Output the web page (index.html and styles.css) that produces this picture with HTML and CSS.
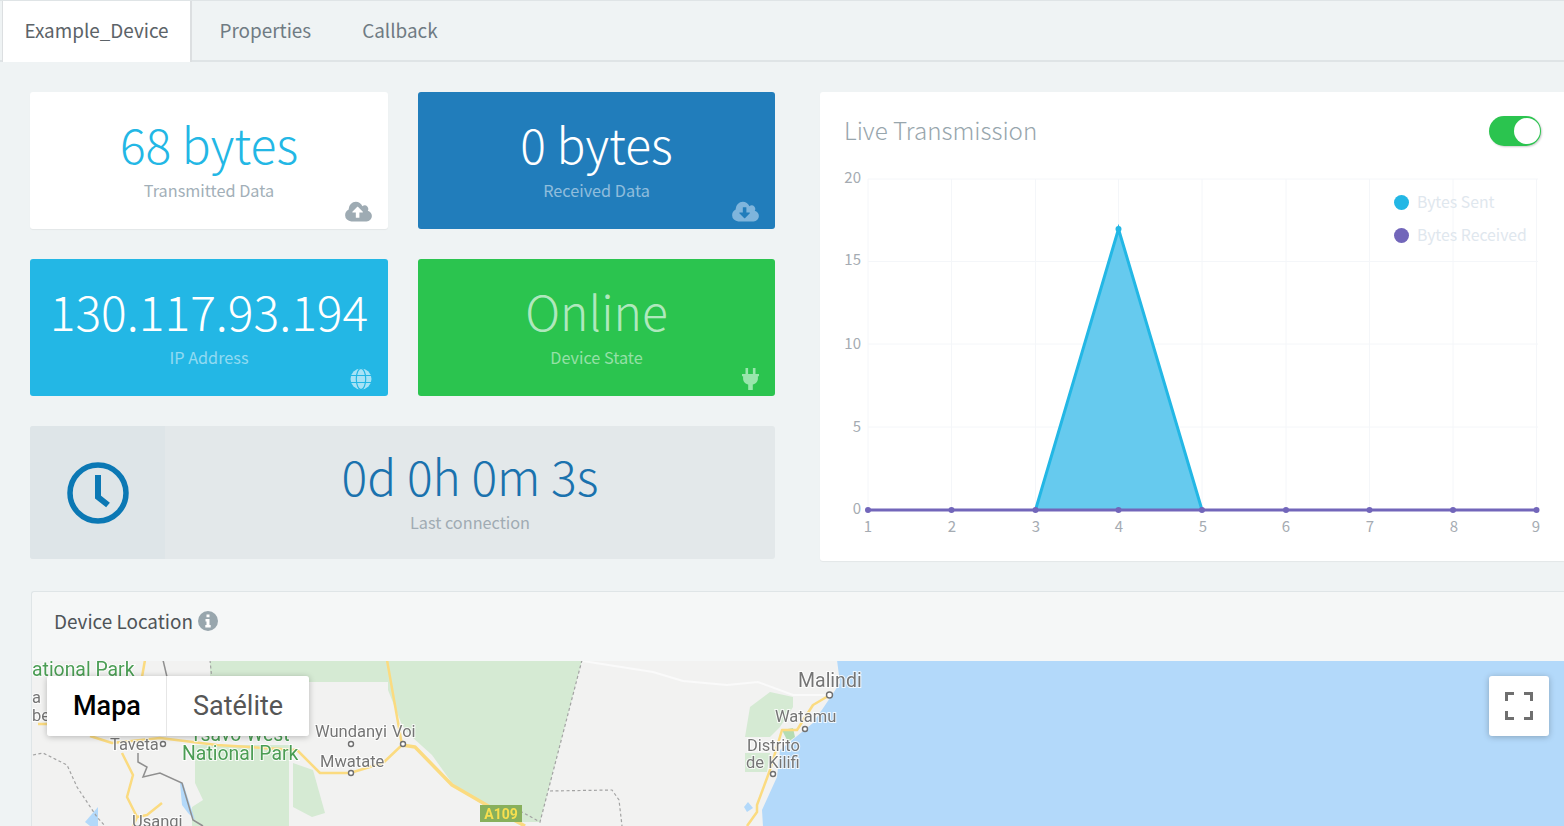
FILE: index.html
```html
<!DOCTYPE html>
<html lang="en">
<head>
<meta charset="utf-8">
<title>Example_Device</title>
<link rel="stylesheet" href="styles.css">
</head>
<body>
<svg class="defs" width="0" height="0" aria-hidden="true">
  <defs>
    <path id="cloud-body" d="M1920 1152q0 159-112.500 271.500t-271.500 112.500h-1088q-185 0-316.500-131.500t-131.500-316.500q0-130 70-240t188-165q-2-30-2-43 0-212 150-362t362-150q156 0 285.500 87t188.500 231q71-62 166-62 106 0 181 75t75 181q0 76-41 138 130 31 213.500 135.500t83.500 238.500z"/>
  </defs>
</svg>
<nav class="tabs">
  <a class="tab tab-active">Example_Device</a>
  <a class="tab">Properties</a>
  <a class="tab">Callback</a>
</nav>
<main class="content">
  <div class="top-grid">
    <section class="stats">
      <div class="stat stat-white">
        <div class="stat-value">68 bytes</div>
        <div class="stat-label">Transmitted Data</div>
        <svg class="stat-icon icon-cloud" viewBox="0 0 1920 1792"><use href="#cloud-body" class="cloud-fill"/><path class="cloud-arrow arrow-white" d="M1280 864q0-14-9-23l-352-352q-9-9-23-9t-23 9l-351 351q-10 12-10 24 0 14 9 23t23 9h224v352q0 13 9.500 22.500t22.500 9.500h192q13 0 22.500-9.500t9.500-22.500v-352h224q13 0 22.500-9.500t9.500-22.500z"/></svg>
      </div>
      <div class="stat stat-blue">
        <div class="stat-value">0 bytes</div>
        <div class="stat-label">Received Data</div>
        <svg class="stat-icon icon-cloud" viewBox="0 0 1920 1792"><use href="#cloud-body" class="cloud-fill"/><path class="cloud-arrow arrow-blue" d="M1280 928q0-14-9-23t-23-9h-224v-352q0-13-9.500-22.500t-22.500-9.500h-192q-13 0-22.500 9.500t-9.500 22.500v352h-224q-13 0-22.500 9.500t-9.500 22.500q0 14 9 23l352 352q9 9 23 9t23-9l351-351q10-12 10-24z"/></svg>
      </div>
      <div class="stat stat-cyan">
        <div class="stat-value">130.117.93.194</div>
        <div class="stat-label">IP Address</div>
        <svg class="stat-icon icon-globe" viewBox="0 0 22 22">
          <circle cx="11" cy="11" r="10.5" class="globe-fill"/>
          <g class="globe-lines">
            <ellipse cx="11" cy="11" rx="4.700" ry="10.500"/>
            <path d="M1 7.500h20M1 14.500h20"/>
          </g>
        </svg>
      </div>
      <div class="stat stat-green">
        <div class="stat-value stat-value-soft">Online</div>
        <div class="stat-label">Device State</div>
        <svg class="stat-icon icon-plug" viewBox="0 0 17 22"><path d="M3.500 0h2.600v6h4.800V0h2.600v6H17v2.200h-1.100v2.600c0 3-2.300 5.300-5.100 5.700V22H6.200v-5.500C3.400 16.100 1.100 13.800 1.100 10.800V8.200H0V6h3.500z"/></svg>
      </div>
      <div class="uptime">
        <div class="uptime-icon">
          <svg class="clock" viewBox="0 0 62 62"><circle cx="31" cy="31" r="28" class="clock-ring"/><path class="clock-hands" d="M31 13v22l10 8"/></svg>
        </div>
        <div class="uptime-body">
          <div class="uptime-value">0d 0h 0m 3s</div>
          <div class="uptime-label">Last connection</div>
        </div>
      </div>
    </section>
    <section class="chart-card">
      <header class="chart-head">
        <h2 class="chart-title">Live Transmission</h2>
        <span class="toggle"><span class="toggle-knob"></span></span>
      </header>
      <svg class="chart" viewBox="820 160 744 400" width="744" height="400">
        <g class="grid">
          <path d="M868 179H1538M868 261.500H1538M868 344H1538M868 427H1538"/>
          <path d="M951.500 179V510M1035.500 179V510M1118.500 179V510M1202 179V510M1286 179V510M1369.500 179V510M1453 179V510M1536.500 179V510M868 179V510"/>
        </g>
        <g class="ticks ticks-y">
          <text x="861" y="183">20</text>
          <text x="861" y="265">15</text>
          <text x="861" y="349">10</text>
          <text x="861" y="432">5</text>
          <text x="861" y="514">0</text>
        </g>
        <g class="ticks ticks-x">
          <text x="868" y="532">1</text>
          <text x="952" y="532">2</text>
          <text x="1036" y="532">3</text>
          <text x="1119" y="532">4</text>
          <text x="1203" y="532">5</text>
          <text x="1286" y="532">6</text>
          <text x="1370" y="532">7</text>
          <text x="1454" y="532">8</text>
          <text x="1536" y="532">9</text>
        </g>
        <polygon class="area" points="1035.500,510 1118.500,229 1202,510"/>
        <polyline class="line-sent" points="1035.500,510 1118.500,229 1202,510"/>
        <circle class="dot-sent" cx="1118.500" cy="229" r="3"/>
        <line class="line-recv" x1="868" y1="510" x2="1536.500" y2="510"/>
        <g class="dot-recv">
          <circle cx="868" cy="510" r="3"/><circle cx="951.500" cy="510" r="3"/><circle cx="1035.500" cy="510" r="3"/><circle cx="1118.500" cy="510" r="3"/><circle cx="1202" cy="510" r="3"/><circle cx="1286" cy="510" r="3"/><circle cx="1369.500" cy="510" r="3"/><circle cx="1453" cy="510" r="3"/><circle cx="1536.500" cy="510" r="3"/>
        </g>
        <circle class="legend-sent" cx="1401.500" cy="202.500" r="7.500"/>
        <text class="legend-text" x="1417" y="208">Bytes Sent</text>
        <circle class="legend-recv" cx="1401.500" cy="235.500" r="7.500"/>
        <text class="legend-text" x="1417" y="241">Bytes Received</text>
      </svg>
    </section>
  </div>
  <section class="location">
    <header class="location-head">
      <span>Device Location</span>
      <svg class="info" viewBox="0 0 20 20"><circle cx="10" cy="10" r="10"/><path class="info-i" d="M8.500 3.500h3v2.800h-3zM7.500 8h4v6h1.200v2.500H7.300V14h1.200v-3.500h-1z"/></svg>
    </header>
    <div class="map">
      <svg class="map-art" viewBox="32 661 1532 166" width="1532" height="166">
        <rect class="land" x="32" y="660" width="1532" height="167"/>
        <g class="park">
          <polygon points="210,660 388,660 388,682 210,682"/>
          <polygon points="388,660 582,660 540,822 522,822 486,807 452,783 432,755 412,737 402,725 388,690"/>
          <polygon points="195,745 289,745 289,826 192,826 192,807 203,800 195,783"/>
          <polygon points="293,763 313,770 325,813 312,817 293,807"/>
          <polygon points="745,737 750,707 770,692 793,697 793,707 780,727 770,737"/>
          <polygon points="745,753 770,753 767,772 745,772"/>
        </g>
        <polygon class="park-deep" points="782,730 793,728 795,737 788,742"/>
        <polyline class="white-road" points="583,661 653,672 683,681 727,685 758,682 793,695 828,695"/>
        <polygon class="sea" points="837,660 840,683 832,695 813,723 780,750 777,777 762,810 763,827 1564,827 1564,660"/>
        <g class="sea">
          <polygon points="180,783 183,783 195,820 188,813 182,805"/>
          <polygon points="98,807 85,822 90,826 98,826"/>
          <polygon points="748,802 753,808 747,812 744,807"/>
        </g>
        <g class="road">
          <polyline points="90,736 112,743 160,738 217,745 297,750 320,773 350,773 383,763 402,745 387,660"/>
          <polyline class="road-wide" points="402,745 415,747 452,785 490,807 525,826"/>
          <polyline points="122,753 133,775 127,797 137,817 133,826"/>
          <polyline points="137,817 147,815 162,803"/>
          <polyline points="145,660 142,677"/>
          <polyline points="38,724 47,724"/>
          <polyline points="830,695 813,705 797,730 782,730 770,770 757,805 757,812 747,826"/>
        </g>
        <g class="border">
          <polyline points="163,660 167,677"/>
          <polyline points="138,753 138,762 147,767 143,777 160,773 182,783 193,820 203,826"/>
        </g>
        <g class="dashed">
          <polyline points="33,755 43,753 67,765 77,787 97,817 105,826"/>
          <polyline points="582,660 540,822 522,812"/>
          <polyline points="550,791 612,790 619,800 622,826"/>
          <polyline points="210,660 212,680"/>
        </g>
        <g class="towns">
          <circle cx="163" cy="744" r="2.500"/><circle cx="351" cy="744" r="2.500"/><circle cx="403" cy="744" r="2.500"/><circle cx="351" cy="773" r="2.500"/><circle cx="829.500" cy="695" r="3"/><circle cx="805" cy="729" r="2.500"/><circle cx="773" cy="774" r="2.500"/>
        </g>
        <g class="label-green">
          <text x="32" y="676">ational Park</text>
          <text x="190" y="741">Tsavo West</text>
          <text x="182" y="760">National Park</text>
        </g>
        <g class="label-grey">
          <text x="32" y="703">a</text>
          <text x="32" y="721">be</text>
          <text x="110" y="750">Taveta</text>
          <text x="315" y="737">Wundanyi</text>
          <text x="392" y="737">Voi</text>
          <text x="320" y="767">Mwatate</text>
          <text x="132" y="827">Usangi</text>
          <text class="label-large" x="798" y="687">Malindi</text>
          <text x="775" y="722">Watamu</text>
          <text x="747" y="751">Distrito</text>
          <text x="746" y="768">de Kilifi</text>
        </g>
        <rect class="shield" x="480" y="805" width="42" height="17"/>
        <text class="shield-text" x="501" y="819">A109</text>
      </svg>
      <div class="map-type">
        <button class="map-btn map-btn-active">Mapa</button>
        <button class="map-btn">Satélite</button>
      </div>
      <button class="map-full" aria-label="Fullscreen">
        <svg viewBox="0 0 28 28" width="28" height="28"><path d="M0 0h9v3H3v6H0zM19 0h9v9h-3V3h-6zM0 19h3v6h6v3H0zM25 19h3v9h-9v-3h6z"/></svg>
      </button>
    </div>
  </section>
</main>
</body>
</html>
```
FILE: styles.css
```css
html, body {
  margin: 0;
  height: 826px;
  overflow: hidden;
}
body {
  background: #eff3f4;
  font-family: "Noto Sans CJK SC", "Noto Sans", sans-serif;
  color: #58666e;
}
.defs { display: block; height: 0; }

.tabs {
  display: flex;
  height: 59px;
  padding: 1px 0 0 2px;
  border-bottom: 2px solid #dfe4e6;
  box-shadow: inset 0 1px 0 #dfe4e6;
}
.tab {
  display: flex;
  align-items: center;
  font-size: 18.9px;
  color: #6f7b83;
  padding: 0 25.5px 2px;
}
.tab-active {
  background: #fff;
  color: #5c6368;
  width: 190px;
  box-sizing: border-box;
  justify-content: center;
  padding: 0 0 4px;
  height: 61px;
  border-right: 2px solid #dcdfe1;
  border-left: 1px solid #dcdfe1;
  margin-right: 2px;
}

.content { padding: 30px 0 0 30px; }
.top-grid {
  display: grid;
  grid-template-columns: 745px 744px;
  column-gap: 45px;
  align-items: start;
}
.stats {
  display: grid;
  grid-template-columns: 358px 357px;
  grid-template-rows: 137px 137px 133px;
  gap: 30px;
}
.stat {
  position: relative;
  border-radius: 3px;
  text-align: center;
  box-sizing: border-box;
  padding-top: 21px;
  color: #fff;
}
.stat-white { background: #fff; box-shadow: 0 1px 1px rgba(0,0,0,.05); }
.stat-blue { background: #217dbb; }
.stat-cyan { background: #23b7e5; }
.stat-green { background: #2bc44f; }
.stat-value {
  font-size: 48px;
  font-weight: 300;
  line-height: 60px;
}
.stat-white .stat-value { color: #23b7e5; }
.stat-value-soft { color: rgba(255,255,255,.65); }
.stat-label {
  font-size: 16.25px;
  line-height: 22px;
  margin-top: 6px;
  color: rgba(255,255,255,.5);
}
.stat-white .stat-label { color: #a2afb8; }
.stat-icon { position: absolute; }
.icon-cloud { width: 27px; height: 25px; right: 16px; bottom: 4px; }
.cloud-fill { fill: #9eabb3; }
.stat-blue .cloud-fill { fill: #7fb5dc; }
.arrow-white { fill: #fff; }
.arrow-blue { fill: #217dbb; }
.icon-globe { width: 22px; height: 22px; right: 16px; bottom: 6px; }
.globe-fill { fill: rgba(255,255,255,.6); }
.globe-lines { fill: none; stroke: #23b7e5; stroke-width: 1.200; }
.icon-plug { width: 17px; height: 22px; right: 16px; bottom: 6px; fill: #98e6ac; }

.uptime {
  grid-column: 1 / span 2;
  display: flex;
  background: #e3e8ea;
  border-radius: 3px;
  overflow: hidden;
}
.uptime-icon {
  width: 135px;
  flex: none;
  background: #dee5e8;
  display: flex;
  align-items: center;
  justify-content: center;
}
.clock { width: 62px; height: 62px; }
.clock-ring { fill: none; stroke: #0b78b4; stroke-width: 5.500; }
.clock-hands { fill: none; stroke: #0b78b4; stroke-width: 6; }
.uptime-body { flex: 1; text-align: center; padding-top: 19px; }
.uptime-value {
  font-size: 48px;
  font-weight: 300;
  line-height: 60px;
  color: #1a72ae;
}
.uptime-label {
  font-size: 16.25px;
  line-height: 22px;
  margin-top: 6px;
  color: #a0abb3;
}

.chart-card {
  background: #fff;
  height: 469px;
  box-shadow: 0 1px 1px rgba(0,0,0,.05);
  border-radius: 3px 0 0 3px;
}
.chart-head {
  display: flex;
  justify-content: space-between;
  align-items: center;
  height: 68px;
  padding: 10px 23px 0 24px;
  box-sizing: border-box;
}
.chart-title {
  margin: 0 0 4px;
  font-size: 24.2px;
  font-weight: 300;
  color: #98a6ad;
}
.toggle {
  width: 52px;
  height: 30px;
  background: #2bc44f;
  border-radius: 15px;
  position: relative;
  box-shadow: 1px 1px 2px rgba(0,0,0,.2);
}
.toggle-knob {
  position: absolute;
  top: 2px;
  right: 1px;
  width: 26px;
  height: 26px;
  background: #fff;
  border-radius: 50%;
}
.chart { display: block; }
.grid path { fill: none; stroke: #f4f6f9; stroke-width: 1; }
.ticks text { font-size: 15px; fill: #a5abb2; }
.ticks-y text { text-anchor: end; }
.ticks-x text { text-anchor: middle; }
.area { fill: #66caee; }
.line-sent { fill: none; stroke: #23b7e5; stroke-width: 3; }
.dot-sent { fill: #23b7e5; }
.line-recv { stroke: #7266ba; stroke-width: 3; }
.dot-recv { fill: #7266ba; }
.legend-sent { fill: #23b7e5; }
.legend-recv { fill: #7266ba; }
.legend-text { font-size: 15.8px; fill: #dfe7ee; }

.location {
  margin: 30px 0 0 1px;
  border: 1px solid #dfe5e7;
  border-right: 0;
  border-bottom: 0;
  border-radius: 3px 0 0 0;
  background: #f5f7f7;
}
.location-head {
  height: 69px;
  box-sizing: border-box;
  display: flex;
  align-items: center;
  gap: 5px;
  padding: 0 0 12px 22px;
  font-size: 18.9px;
  color: #4f5458;
}
.info { width: 20px; height: 20px; fill: #98a6ad; }
.info-i { fill: #fff; }
.map { position: relative; height: 200px; overflow: hidden; }
.map-art { display: block; filter: blur(.45px); }
.land { fill: #f2f2f1; }
.park polygon { fill: #d5ead3; }
.park-deep { fill: #b5dcb3; }
.sea, .sea polygon { fill: #b3d9fa; }
.white-road { fill: none; stroke: #fafafa; stroke-width: 2; }
.road polyline { fill: none; stroke: #fbdb80; stroke-width: 2.500; stroke-linejoin: round; }
.road .road-wide { stroke-width: 3.500; }
.border polyline { fill: none; stroke: #8f8f8f; stroke-width: 1.500; }
.dashed polyline { fill: none; stroke: #a3a3a3; stroke-width: 1.200; stroke-dasharray: 3 2.500; }
.towns circle { fill: #fff; stroke: #707070; stroke-width: 1.400; }
.label-green text, .label-grey text {
  font-family: Roboto, sans-serif;
  paint-order: stroke;
  stroke: #fff;
  stroke-width: 2px;
  stroke-opacity: .8;
}
.label-green text { font-size: 19.4px; fill: #4b9d54; }
.label-grey text { font-size: 16.5px; fill: #757575; }
.label-grey .label-large { font-size: 19.5px; }
.shield { fill: #88b05c; }
.shield-text {
  font-family: Roboto, sans-serif;
  font-size: 14px;
  font-weight: 700;
  fill: #f7df4f;
  text-anchor: middle;
}
.map-type {
  position: absolute;
  left: 15px;
  top: 15px;
  display: flex;
  height: 60px;
  border-radius: 3px;
  overflow: hidden;
  box-shadow: 0 1px 6px rgba(0,0,0,.25);
}
.map-btn {
  border: 0;
  background: #fff;
  font-family: Roboto, sans-serif;
  font-size: 27px;
  color: #565656;
  padding: 0 26px;
  height: 60px;
}
.map-btn-active {
  color: #000;
  font-weight: 500;
  width: 120px;
  border-right: 1px solid #e6e6e6;
}
.map-full {
  position: absolute;
  left: 1457px;
  top: 15px;
  width: 60px;
  height: 60px;
  border: 0;
  padding: 0;
  background: #fff;
  border-radius: 3px;
  box-shadow: 0 1px 6px rgba(0,0,0,.25);
  display: flex;
  align-items: center;
  justify-content: center;
}
.map-full path { fill: #6f6f6f; }
```
